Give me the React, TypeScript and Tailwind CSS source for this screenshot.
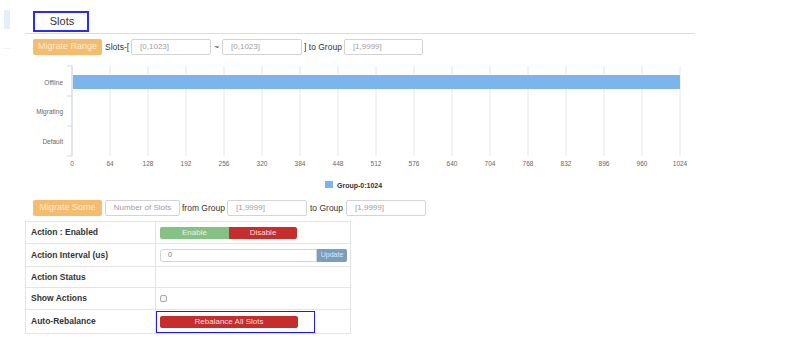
const ticks = [0, 64, 128, 192, 256, 320, 384, 448, 512, 576, 640, 704, 768, 832, 896, 960, 1024];

function Field({ w, text }: { w: string; text: string }) {
  return (
    <div className={`${w} h-[16px] border border-[#d4d4d4] rounded-[2px] flex items-center pl-[8px] text-[8px] text-[#a0a0a0]`}>
      {text}
    </div>
  );
}

function SlotsChart() {
  // page coords minus (25, 60)
  const x0 = 47;
  const x1 = 655;
  const step = (x1 - x0) / 16;
  return (
    <svg width="670" height="136" viewBox="0 0 670 136" className="block">
      {ticks.map((t, i) => (
        <line key={t} x1={x0 + i * step} y1={6} x2={x0 + i * step} y2={96} stroke="#e6e6e6" strokeWidth="1" />
      ))}
      <rect x={x0 + 1} y={15} width={x1 - x0 - 1} height={14} fill="#7cb5ec" />
      <line x1={x0} y1={6} x2={x0} y2={96} stroke="#ccd6eb" strokeWidth="1" />
      {[6, 36, 66, 96].map((y) => (
        <line key={y} x1={x0 - 5} y1={y} x2={x0} y2={y} stroke="#ccd6eb" strokeWidth="1" />
      ))}
      {[
        ["Offline", 25],
        ["Migrating", 54],
        ["Default", 84],
      ].map(([label, y]) => (
        <text key={label} x={38} y={y as number} textAnchor="end" fontSize="6.5" fill="#666" fontFamily="Liberation Sans, Arial, sans-serif">
          {label}
        </text>
      ))}
      {ticks.map((t, i) => (
        <text key={t} x={x0 + i * step} y={106} textAnchor="middle" fontSize="6.5" fill="#666" fontFamily="Liberation Sans, Arial, sans-serif">
          {t}
        </text>
      ))}
      <rect x={300} y={121} width={8} height={7} fill="#7cb5ec" />
      <text x={312} y={127.5} fontSize="7" fontWeight="bold" fill="#333" fontFamily="Liberation Sans, Arial, sans-serif">
        Group-0:1024
      </text>
    </svg>
  );
}

function Row({ h, label, children, last }: { h: string; label: string; children?: React.ReactNode; last?: boolean }) {
  return (
    <div className={`flex ${h} ${last ? "" : "border-b border-[#e4e4e4]"}`}>
      <div className="w-[130px] border-r border-[#e4e4e4] flex items-center pl-[5px] text-[8.5px] font-bold text-[#333]">{label}</div>
      <div className="flex-1 flex items-center pl-[4px]">{children}</div>
    </div>
  );
}

export default function App() {
  return (
    <div className="w-[789px] h-[359px] bg-white flex overflow-hidden" style={{ fontFamily: "'Liberation Sans', Arial, sans-serif" }}>
      {/* sidebar stub */}
      <div className="w-[25px] pt-[10px] pl-[4px]">
        <div className="w-[6px] h-[19px] bg-[#e3f0fb]" />
        <div className="w-[6px] h-[1px] bg-[#eef2f6] mt-[19px]" />
      </div>

      <div className="w-[670px] flex flex-col">
        <div className="pt-[11px] pl-[8px] border-b border-[#dcdcdc] pb-[1px]">
          <div className="w-[56px] h-[21px] border-2 border-[#2a2aff] flex items-center justify-center pl-[2px] text-[11px] text-[#333]">
            Slots
          </div>
        </div>

        <div className="flex items-center pl-[8px] mt-[5px] h-[16px] text-[8.5px] text-[#333]">
          <div className="w-[69px] h-[16px] bg-[#f4bc6e] rounded-[2px] flex items-center justify-center text-[9px] text-[#fcebd2]">
            Migrate Range
          </div>
          <span className="ml-[3px] mr-[2px]">Slots-[</span>
          <Field w="w-[80px]" text="[0,1023]" />
          <span className="mx-[3px]">~</span>
          <Field w="w-[80px]" text="[0,1023]" />
          <span className="ml-[2px] mr-[2px]">] to Group</span>
          <Field w="w-[79px]" text="[1,9999]" />
        </div>

        <div className="mt-[5px]">
          <SlotsChart />
        </div>

        <div className="flex items-center pl-[8px] mt-[4px] h-[16px] text-[8.5px] text-[#333]">
          <div className="w-[69px] h-[16px] bg-[#f4bc6e] rounded-[2px] flex items-center justify-center text-[9px] text-[#fcebd2]">
            Migrate Some
          </div>
          <div className="ml-[3px] w-[75px] h-[16px] border border-[#d4d4d4] rounded-[2px] flex items-center justify-center text-[8px] text-[#a0a0a0]">
            Number of Slots
          </div>
          <span className="ml-[2px] mr-[2px]">from Group</span>
          <Field w="w-[80px]" text="[1,9999]" />
          <span className="ml-[3px] mr-[3px]">to Group</span>
          <Field w="w-[80px]" text="[1,9999]" />
        </div>

        <div className="mt-[5px] w-[326px] border border-[#e4e4e4]">
          <Row h="h-[22px]" label="Action : Enabled">
            <div className="flex h-[12px] w-[137px] rounded-[2px] overflow-hidden text-[8px]">
              <div className="w-[69px] bg-[#85c085] text-[#e8f5e8] flex items-center justify-center">Enable</div>
              <div className="flex-1 bg-[#c62d2d] text-[#f8dede] flex items-center justify-center">Disable</div>
            </div>
          </Row>
          <Row h="h-[23px]" label="Action Interval (us)">
            <div className="flex h-[13px] w-[187px]">
              <div className="flex-1 border border-[#d4d4d4] rounded-l-[3px] flex items-center pl-[7px] text-[7px] text-[#777]">0</div>
              <div className="w-[30px] bg-[#7b9dbe] rounded-r-[2px] flex items-center justify-center text-[7px] text-[#dde6ef]">Update</div>
            </div>
          </Row>
          <Row h="h-[21px]" label="Action Status" />
          <Row h="h-[22px]" label="Show Actions">
            <div className="w-[7px] h-[7px] border border-[#aaa] rounded-[2px] bg-[#f4f4f4]" />
          </Row>
          <Row h="h-[23px]" label="Auto-Rebalance" last>
            <div className="-ml-[4px] w-[159px] h-[22px] border border-[#1a1aff] flex items-center pl-[3px]">
              <div className="w-[138px] h-[12px] bg-[#c62d2d] rounded-[2px] flex items-center justify-center text-[8px] text-[#f8dede]">
                Rebalance All Slots
              </div>
            </div>
          </Row>
        </div>
      </div>
    </div>
  );
}
